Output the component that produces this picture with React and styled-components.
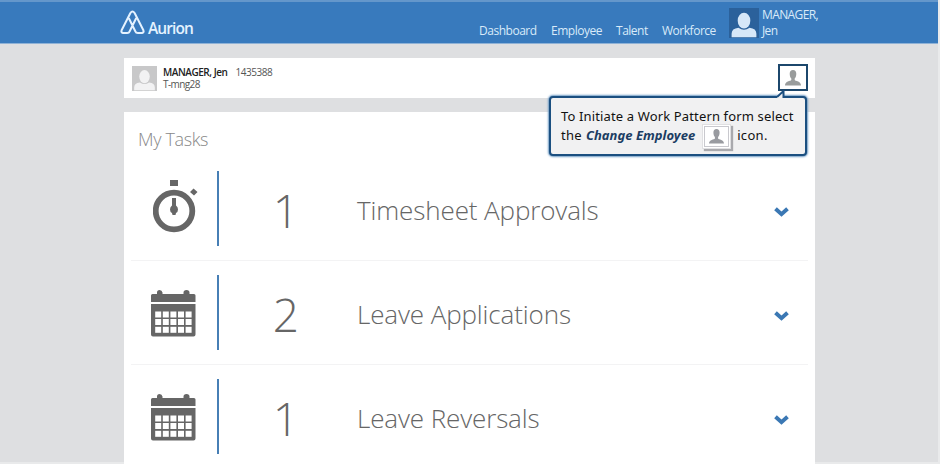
import React from "react";
import styled, { createGlobalStyle } from "styled-components";

const GlobalStyle = createGlobalStyle`
  *, *::before, *::after { box-sizing: border-box; }
  html, body { margin: 0; height: 464px; overflow: hidden; }
  body { background: #dedfe1; font-family: "Open Sans", "Noto Sans", sans-serif; }
`;

const Screen = styled.div`
  width: 940px;
  height: 464px;
  overflow: hidden;
  background: linear-gradient(#dedfe1 462px, #e9eaeb 462px);
  border-right: 2px solid #e9eaeb;
`;

const TopBar = styled.header`
  display: flex;
  height: 44px;
  width: 939px;
  background: #387abd;
  border-top: 2px solid #6497cb;
  border-bottom: 1px solid #8fb2d6;
  padding-left: 120px;
`;

const Brand = styled.div`
  display: flex;
  width: 359px;
  padding-top: 8px;
  svg { display: block; flex: none; }
`;

const BrandName = styled.span`
  margin: 8px 0 0 3px;
  font: 600 15.5px/20px "Open Sans", sans-serif;
  letter-spacing: -0.9px;
  color: #e4f2ff;
`;

const Nav = styled.nav`
  display: flex;
  gap: 14px;
  padding-top: 20px;
  width: 249px;
`;

const NavLink = styled.a`
  font-size: 12px;
  line-height: 18px;
  letter-spacing: -0.48px;
  color: #d9eaf9;
  white-space: nowrap;
  width: ${(p) => p.$w}px;
`;

const Account = styled.div`
  display: flex;
  padding-top: 6px;
  margin-left: 1px;
  svg { display: block; flex: none; }
`;

const AccountName = styled.div`
  margin: -1px 0 0 3px;
  font-size: 12px;
  line-height: 16px;
  letter-spacing: -0.6px;
  color: #d9eaf9;
`;

const Content = styled.main`
  width: 691px;
  margin: 14px 0 0 124px;
`;

const EmployeeBar = styled.section`
  display: flex;
  justify-content: space-between;
  height: 40px;
  background: #fff;
  padding: 6px 7px 0 8px;
  svg { display: block; }
`;

const Person = styled.div`
  display: flex;
  gap: 6px;
  padding-top: 2px;
`;

const PersonText = styled.div`
  font-size: 10px;
  line-height: 12px;
  color: #555;
`;

const PersonLine = styled.div`
  display: flex;
  gap: 8px;
  height: 12px;
  letter-spacing: ${(p) => p.$spacing}px;
  strong { font-weight: 600; color: #222; }
`;

const ChangeSlot = styled.div`
  position: relative;
  width: 30px;
  height: 27px;
`;

const ChangeButton = styled.button`
  display: flex;
  align-items: center;
  justify-content: center;
  width: 30px;
  height: 27px;
  padding: 1px 0 0;
  background: #fff;
  border: 2px solid #1c476c;
`;

const Callout = styled.div`
  position: absolute;
  right: 1px;
  top: 32px;
  width: 258px;
  height: 60px;
  padding: 9px 0 0 10px;
  background: #f1f1f2;
  border: 2px solid #1b4f80;
  border-radius: 4px;
  box-shadow: 0 0 2px 1px #6f9bc4;
  color: #111;
  font: 13px/19px "Noto Sans", sans-serif;
  white-space: nowrap;
`;

const CalloutTip = styled.svg`
  position: absolute;
  right: 16px;
  top: -8px;
`;

const CalloutLine = styled.div`
  display: flex;
  height: 19px;
  letter-spacing: ${(p) => p.$spacing}px;
  em { color: #1c3d63; font-weight: 700; margin: 0 6px 0 4px; letter-spacing: 0.03px; }
`;

const InlineIcon = styled.span`
  display: flex;
  align-items: center;
  justify-content: center;
  width: 29px;
  height: 25px;
  margin: -2px 6px 0 1px;
  border: 1px solid #e0e0e2;
  background: #fff;
  box-shadow: 2px 2px 1px #a9a9ad;
`;

const InlineIconFrame = styled.span`
  display: flex;
  align-items: center;
  justify-content: center;
  width: 25px;
  height: 21px;
  border: 1px solid #c9c9ce;
`;

const Tasks = styled.section`
  margin-top: 14px;
  height: 360px;
  background: #fff;
  padding: 0 7px;
`;

const TasksTitle = styled.h1`
  margin: 0;
  height: 45px;
  padding: 14px 0 0 7px;
  font-size: 18px;
  line-height: 26px;
  letter-spacing: -0.35px;
  font-weight: 300;
  color: #888;
`;

const TaskRow = styled.article`
  display: grid;
  grid-template-columns: 86px 2px 134px 405px 1fr;
  align-items: center;
  height: 104px;
  border-bottom: 1px solid #f3f3f4;
  svg { display: block; }
`;

const TaskIcon = styled.div`
  padding-left: ${(p) => (p.$watch ? 22 : 20)}px;
  padding-top: ${(p) => (p.$watch ? 0 : 2)}px;
  padding-bottom: ${(p) => (p.$watch ? 5 : 0)}px;
`;

const Divider = styled.i`
  height: 75px;
  width: 2px;
  background: #477fb5;
`;

const Count = styled.div`
  padding-top: 2px;
  text-align: center;
  font-size: 46px;
  font-weight: 300;
  line-height: 60px;
  color: #666;
`;

const TaskName = styled.h2`
  margin: 0;
  padding: 3px 0 0 4px;
  font-size: 26px;
  letter-spacing: -0.12px;
  font-weight: 300;
  color: #666;
  white-space: nowrap;
`;

const Chevron = styled.div`
  padding: 6px 0 0 16px;
`;

const Logo = () => (
  <svg width="25" height="25" viewBox="0 0 25 25" fill="none" stroke="#e4f2ff" strokeWidth="2" strokeLinejoin="round" strokeLinecap="round">
    <path d="M9 8.500 15.300 21.300Q16 23 17.800 23H22Q24.300 22.500 23.400 20.300L14.600 3Q12.500 0 10.400 3L1.600 20.300Q.7 22.500 3 23H7.200Q9 23 9.700 21.300L16 8.500" />
  </svg>
);

const Avatar = ({ size, bg, fg }) => (
  <svg width={size} height={size} viewBox="0 0 30 30">
    <path fill={bg} d="M0 0h30v30H0z" />
    <ellipse cx="15" cy="12.700" rx="6.300" ry="7.900" fill={fg} />
    <path fill={fg} d="M2.600 29.200v-3.400q0-5.300 6.900-6 5.500 3.800 11 0 6.900.7 6.900 6v3.400z" />
  </svg>
);

const Bust = ({ width, fill }) => (
  <svg width={width} height={width} viewBox="0 0 17 17">
    <path fill={fill} d="M8.500 0C6.200 0 5 1.600 5 4c0 2.500.7 4 1.700 5v1.700C6 12 0 11.800 0 16.500h17c0-4.700-6-4.500-6.700-5.800V9C11.300 8 12 6.500 12 4c0-2.400-1.200-4-3.500-4z" />
  </svg>
);

const Stopwatch = () => (
  <svg width="45" height="53" viewBox="0 0 45 53">
    <circle cx="21" cy="31" r="18.300" fill="none" stroke="#666" strokeWidth="5.800" />
    <path fill="#666" d="M17 0h8v6h-8zM40.500 8.500l4 3.500-3.500 3.500-4-3.500zM19 18h4v7.500q2 1.500 2 4t-2 3.500l-.5 2h-3l-.5-2q-2-1-2-3.500t2-4z" />
  </svg>
);

const Calendar = () => (
  <svg width="45" height="47" viewBox="0 0 45 47">
    <path fill="#666" d="M0 12V5.500Q0 4 1.500 4H6V2.500Q6 0 8.500 0T11.500 2.500V4h21V2.500Q32.500 0 35.500 0T38.500 2.500V4h4.500q1.500 0 1.500 1.500V12zM0 14h44.500v30.500q0 2-2 2H2q-2 0-2-2z" />
    {[21.5, 29, 36.8].map((y) =>
      [4.2, 11.8, 19.4, 27, 34.6].map((x) => (
        <rect key={`${x}-${y}`} x={x} y={y} width="6" height="6" fill="#fff" />
      ))
    )}
  </svg>
);

const Down = () => (
  <svg width="15" height="10" viewBox="0 0 15 10" fill="none" stroke="#3b78b4" strokeWidth="3.900">
    <path d="M1.500 1.700 7.500 7.200 13.500 1.700" />
  </svg>
);

const links = [["Dashboard", 58], ["Employee", 51], ["Talent", 32], ["Workforce", 54]];
const tasks = [
  { icon: "watch", count: 1, name: "Timesheet Approvals" },
  { icon: "calendar", count: 2, name: "Leave Applications" },
  { icon: "calendar", count: 1, name: "Leave Reversals" },
];

export default function App() {
  return (
    <Screen>
      <GlobalStyle />
      <TopBar>
        <Brand><Logo /><BrandName>Aurion</BrandName></Brand>
        <Nav>{links.map(([label, w]) => <NavLink key={label} $w={w}>{label}</NavLink>)}</Nav>
        <Account>
          <Avatar size={30} bg="#2b619b" fg="#d6e7f8" />
          <AccountName>MANAGER,<br />Jen</AccountName>
        </Account>
      </TopBar>
      <Content>
        <EmployeeBar>
          <Person>
            <Avatar size={25} bg="#c8c8c9" fg="#f2f2f3" />
            <PersonText>
              <PersonLine $spacing={-0.46}><strong>MANAGER, Jen</strong><span>1435388</span></PersonLine>
              <PersonLine $spacing={-0.6}>T-mng28</PersonLine>
            </PersonText>
          </Person>
          <ChangeSlot>
            <ChangeButton aria-label="Change Employee"><Bust width={16} fill="#999c9c" /></ChangeButton>
            <Callout>
              <CalloutTip width="12" height="9" viewBox="0 0 12 9">
                <path d="M0 7 6.500 1v6L8 9H0z" fill="#f1f1f2" />
                <path d="M0 7 6.500 1v6H12" fill="none" stroke="#1b4f80" strokeWidth="2" />
              </CalloutTip>
              <CalloutLine $spacing={0.14}>To Initiate a Work Pattern form select</CalloutLine>
              <CalloutLine $spacing={0.3}>
                the <em>Change Employee</em>
                <InlineIcon><InlineIconFrame><Bust width={15} fill="#999ba0" /></InlineIconFrame></InlineIcon>
                icon.
              </CalloutLine>
            </Callout>
          </ChangeSlot>
        </EmployeeBar>
        <Tasks>
          <TasksTitle>My Tasks</TasksTitle>
          {tasks.map((t) => (
            <TaskRow key={t.name}>
              <TaskIcon $watch={t.icon === "watch"}>
                {t.icon === "watch" ? <Stopwatch /> : <Calendar />}
              </TaskIcon>
              <Divider />
              <Count>{t.count}</Count>
              <TaskName>{t.name}</TaskName>
              <Chevron><Down /></Chevron>
            </TaskRow>
          ))}
        </Tasks>
      </Content>
    </Screen>
  );
}
